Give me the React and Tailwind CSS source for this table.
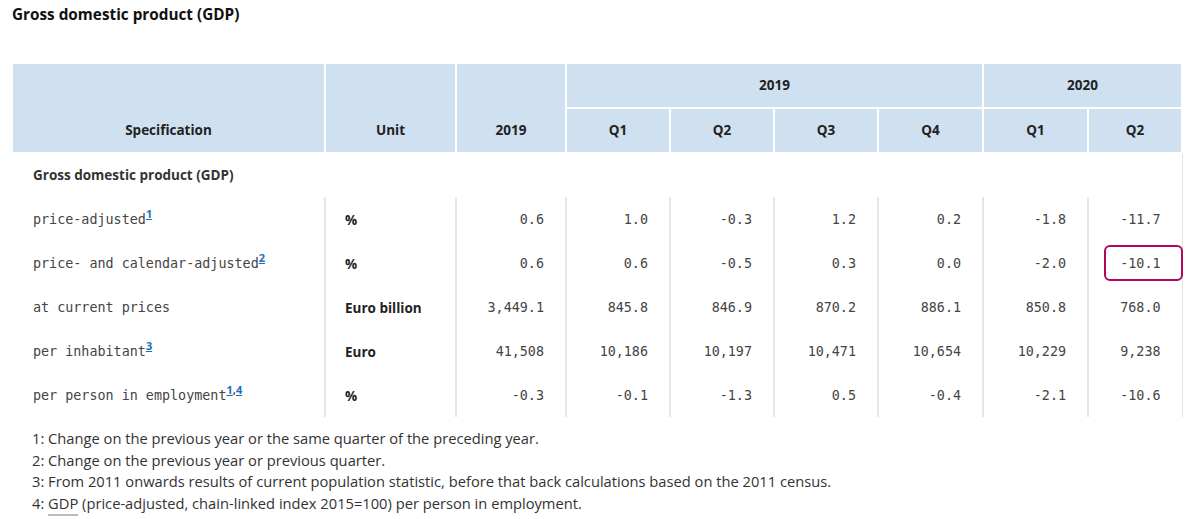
const COLS = [
  { label: "2019", w: "w-[110px]" },
  { label: "Q1", w: "w-[104px]" },
  { label: "Q2", w: "w-[104px]" },
  { label: "Q3", w: "w-[104px]" },
  { label: "Q4", w: "w-[105px]" },
  { label: "Q1", w: "w-[105px]" },
  { label: "Q2", w: "w-[94px]" },
];

const ROWS = [
  { label: "price-adjusted", notes: ["1"], unit: "%", values: ["0.6", "1.0", "-0.3", "1.2", "0.2", "-1.8", "-11.7"] },
  { label: "price- and calendar-adjusted", notes: ["2"], unit: "%", values: ["0.6", "0.6", "-0.5", "0.3", "0.0", "-2.0", "-10.1"], mark: 6 },
  { label: "at current prices", notes: [], unit: "Euro billion", values: ["3,449.1", "845.8", "846.9", "870.2", "886.1", "850.8", "768.0"] },
  { label: "per inhabitant", notes: ["3"], unit: "Euro", values: ["41,508", "10,186", "10,197", "10,471", "10,654", "10,229", "9,238"] },
  { label: "per person in employment", notes: ["1", "4"], unit: "%", values: ["-0.3", "-0.1", "-1.3", "0.5", "-0.4", "-2.1", "-10.6"] },
];

const NOTES = [
  "Change on the previous year or the same quarter of the preceding year.",
  "Change on the previous year or previous quarter.",
  "From 2011 onwards results of current population statistic, before that back calculations based on the 2011 census.",
];

const sans = "font-['Open_Sans',sans-serif]";
const mono = "font-['DejaVu_Sans_Mono',monospace]";

function Notes({ list }) {
  return (
    <sup className={`text-[11px] text-[#1d6fb8] font-bold top-[-0.55em] ${sans}`}>
      {list.map((n, i) => (
        <span key={i}>
          {i > 0 && <span className="text-[#444]">,</span>}
          <span className="underline">{n}</span>
        </span>
      ))}
    </sup>
  );
}

export default function App() {
  return (
    <div className={`w-[1200px] h-[519px] bg-white overflow-hidden ${sans}`}>
      <h2 className="pl-[12px] pt-[3px] text-[15.3px] font-bold text-[#111] leading-[22px]">
        Gross domestic product (GDP)
      </h2>

      <table className="ml-[11px] mt-[37px] border-collapse table-fixed w-[1171px]">
        <colgroup>
          <col className="w-[313px]" />
          <col className="w-[131px]" />
          {COLS.map((c, i) => (
            <col key={i} className={c.w} />
          ))}
        </colgroup>
        <thead className="text-[13.5px] font-bold text-[#222]">
          <tr className="h-[45px]">
            <th rowSpan={2} className="bg-[#cfe0f0] border-2 border-white align-bottom pb-[12px]">Specification</th>
            <th rowSpan={2} className="bg-[#cfe0f0] border-2 border-white align-bottom pb-[12px]">Unit</th>
            <th rowSpan={2} className="bg-[#cfe0f0] border-2 border-white align-bottom pb-[12px]">2019</th>
            <th colSpan={4} className="bg-[#cfe0f0] border-2 border-white">2019</th>
            <th colSpan={2} className="bg-[#cfe0f0] border-2 border-white">2020</th>
          </tr>
          <tr className="h-[45px]">
            {COLS.slice(1).map((c, i) => (
              <th key={i} className="bg-[#cfe0f0] border-2 border-white">{c.label}</th>
            ))}
          </tr>
        </thead>
        <tbody>
          <tr className="h-[44px]">
            <td colSpan={9} className="pl-[21px] text-[13.5px] font-bold text-[#333] border-r border-[#e2e2e2]">
              Gross domestic product (GDP)
            </td>
          </tr>
          {ROWS.map((r) => (
            <tr key={r.label} className="h-[44px]">
              <td className={`pl-[21px] pt-[2px] text-[13.4px] text-[#444] ${mono}`}>
                {r.label}
                <Notes list={r.notes} />
              </td>
              <td className="pl-[19px] pt-[2px] text-[13.5px] font-bold text-[#222] border-l-2 border-[#e6e6e6]">{r.unit}</td>
              {r.values.map((v, i) => (
                <td
                  key={i}
                  className={`relative text-right pr-[21px] pt-[2px] text-[13.4px] text-[#444] border-l-2 border-[#e6e6e6] ${mono} ${i === 6 ? "border-r border-r-[#e2e2e2]" : ""}`}
                >
                  {v}
                  {r.mark === i && (
                    <span className="absolute left-[15px] right-[-1px] top-[4px] bottom-[4px] border-2 border-[#b3045f] rounded-[6px]" />
                  )}
                </td>
              ))}
            </tr>
          ))}
        </tbody>
      </table>

      <div className="pl-[32px] pt-[11px] text-[14.7px] leading-[21.7px] text-[#333]">
        {NOTES.map((n, i) => (
          <div key={i}>
            {i + 1}: {n}
          </div>
        ))}
        <div>
          4: <abbr className="no-underline border-b-2 border-[#bbb] pb-[1px]">GDP</abbr> (price-adjusted, chain-linked index 2015=100) per person in employment.
        </div>
      </div>
    </div>
  );
}
